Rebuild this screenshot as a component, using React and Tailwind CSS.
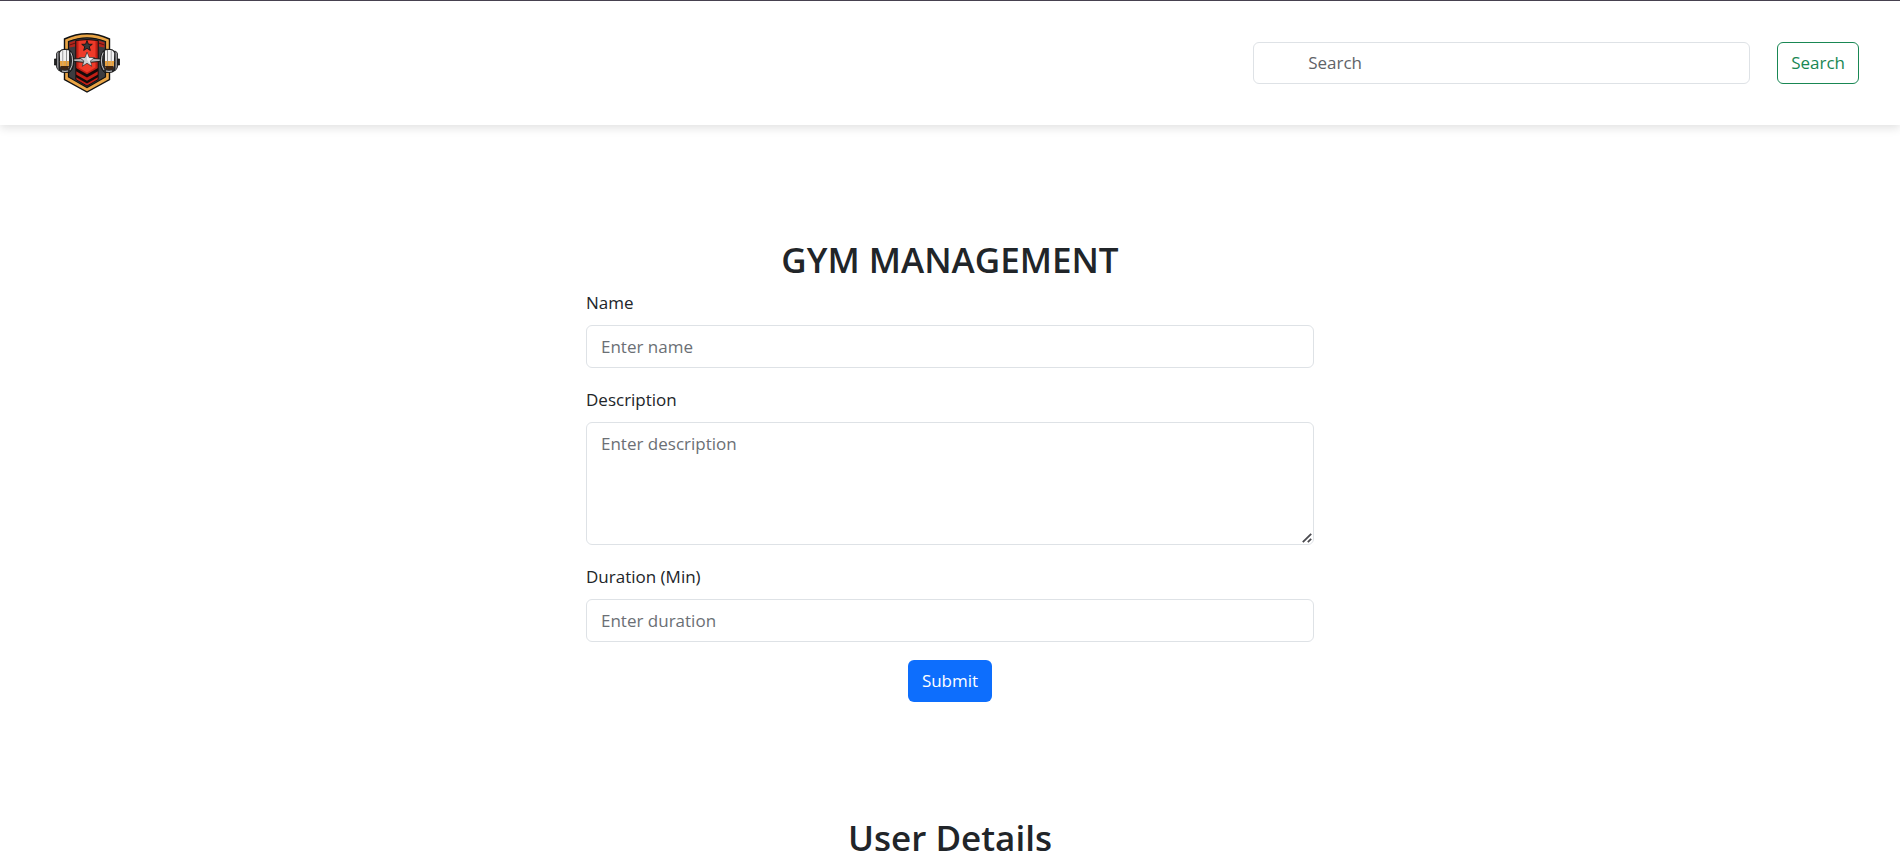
const field =
  "block w-full rounded-md border border-[#dee2e6] bg-white px-3.5 text-[17px] text-[#212529] placeholder:text-[#6b6f75] focus:border-[#86b7fe] focus:outline-none";

const star = "0,-10 2.6,-3.2 9.6,-3.1 4.1,1.2 6,8.1 0,4.2 -6,8.1 -4.1,1.2 -9.6,-3.1 -2.6,-3.2";

function Plates() {
  return (
    <g>
      <path d="M.4 26h3v6h-3z" fill="#222" stroke="#111" strokeWidth=".8" />
      <path d="M2.500 20.500Q3.500 18 5.500 18V38Q3.500 37 2.500 34z" fill="#8e8e92" stroke="#111" strokeWidth=".8" />
      <path d="M5 19.500Q6.500 16.300 10 16.300h4.500q5 3 5.300 11.200t-4.300 12H9.500Q6 39.500 5 36z" fill="#2a2a2c" stroke="#111" strokeWidth=".8" />
      <path d="M5.800 20q1-2.600 2.900-2.900v18L6.300 34zM9.100 17h2.900v18.500H9.100zM12.500 17l2.500.6v17.500l-2.500.6z" fill="#f1f1f2" />
      <path d="M5.800 28h2.900v5H6.300zM9.100 28H12v5.500H9.100zM12.500 28H15v5h-2.500z" fill="#e8a13d" />
      <path d="M6.300 33H15l-.6 3.500H7.300z" fill="#3d2412" />
      <path d="M16.800 19.500q1.800 3.500 1.800 8.500t-2.600 9" fill="none" stroke="#c2c2c5" strokeWidth="1" />
      <path d="M8 38q3 .8 6 0" fill="none" stroke="#d0d0d2" strokeWidth="1" />
    </g>
  );
}

function Logo() {
  return (
    <svg viewBox="0 0 66 60" className="h-[60px] w-[66px]" aria-hidden="true">
      <path d="M10.500 6Q33-4.500 55.500 6V46.500L33 59 10.500 46.500z" fill="#e9a445" stroke="#111" strokeWidth="1.400" />
      <path d="M14.500 8.500Q33 1 51.500 8.500V44L33 54.500 14.500 44z" fill="#3c3c40" stroke="#111" strokeWidth="1.200" />
      <path d="M15.500 9.500l6-2v6l-6 1zM50.500 9.500l-6-2v6l6 1z" fill="#b3241b" />
      <path d="M15.500 12l6-2M50.500 12l-6-2" stroke="#4a100c" strokeWidth=".8" />
      <path d="M21.800 7.500q11.200-2 22.400 0V46.500L33 53l-11.200-6.500z" fill="#c21f16" stroke="#111" />
      <path d="M24.500 8q8.500-1.200 17 0V34.500L33 39.500l-8.500-5z" fill="#ee3a29" />
      <path d="M22 35l11 6.200L44 35v3.200l-11 6.300-11-6.300zM22 41.500l11 6.200 11-6.200v2.800L33 50.500l-11-6.200z" fill="#150a0a" />
      <path d="M18 26l15-.8 15 .8v2.200L33 29.600 18 28.200z" fill="#b5b5b8" stroke="#111" strokeWidth=".9" />
      <Plates />
      <g transform="translate(66 0) scale(-1 1)">
        <Plates />
      </g>
      <polygon points={star} transform="translate(33 13) scale(.55)" fill="#3a3a3c" stroke="#111" strokeWidth="1.600" />
      <polygon points={star} transform="translate(33 27) scale(.78)" fill="#cfcfd2" stroke="#333" strokeWidth="1" />
      <path d="M33 20v7l4.500 5.500-1.500-4.500 3.500-3-4.500-.3z" fill="#fff" opacity=".6" />
    </svg>
  );
}

function Field({ id, label, children }) {
  return (
    <div className="mb-[18px]">
      <label htmlFor={id} className="mb-2 block text-[17px] leading-7">
        {label}
      </label>
      {children}
    </div>
  );
}

export default function App() {
  return (
    <div className="min-h-screen bg-white font-['Open_Sans','Noto_Sans',sans-serif] text-[#212529]">
      <header className="flex items-center justify-between border-t border-[#46414f] bg-white py-8 pr-[41px] pl-[54px] shadow-[0_3px_9px_rgba(0,0,0,0.12)]">
        <a href="#" aria-label="Home">
          <Logo />
        </a>
        <form role="search" className="flex items-center gap-[27px]" onSubmit={(e) => e.preventDefault()}>
          <input
            type="search"
            aria-label="Search"
            placeholder="Search"
            className="h-[42px] w-[497px] rounded-md border border-[#dee2e6] bg-white pr-3.5 pb-0.5 pl-[54px] text-[17px] placeholder:text-[#5f6368] focus:outline-none"
          />
          <button type="submit" className="h-[42px] rounded-md border border-[#198754] px-[13px] text-[17px] text-[#198754]">
            Search
          </button>
        </form>
      </header>

      <main className="px-4 pt-[113px]">
        <form className="mx-auto max-w-[728px]" onSubmit={(e) => e.preventDefault()}>
          <h2 className="mb-2 text-center text-[35px] leading-[43px] font-semibold">GYM MANAGEMENT</h2>
          <Field id="name" label="Name">
            <input id="name" type="text" placeholder="Enter name" className={`${field} h-[43px]`} />
          </Field>
          <Field id="description" label="Description">
            <div className="relative">
              <textarea id="description" rows={4} placeholder="Enter description" className={`${field} h-[123px] resize-none py-[7px] leading-7`} />
              <svg viewBox="0 0 10 10" className="pointer-events-none absolute right-0.5 bottom-0.5 size-2.5" aria-hidden="true">
                <path d="M.8 9.200L9.200 .8M5.800 9.200L9.200 5.800" stroke="#4a4a4f" strokeWidth="1.800" />
              </svg>
            </div>
          </Field>
          <Field id="duration" label="Duration (Min)">
            <input id="duration" type="text" placeholder="Enter duration" className={`${field} h-[43px]`} />
          </Field>
          <div className="text-center">
            <button type="submit" className="h-[42px] rounded-md bg-[#0d6efd] px-3.5 text-[17px] text-white">
              Submit
            </button>
          </div>
        </form>
        <h2 className="mt-[114px] text-center text-[35px] leading-[43px] font-semibold">User Details</h2>
      </main>
    </div>
  );
}
